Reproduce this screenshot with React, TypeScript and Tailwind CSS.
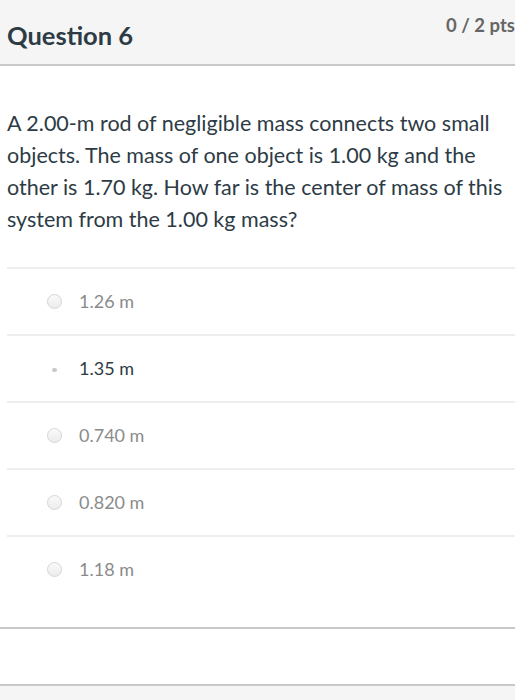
const answers = [
  { label: "1.26 m", selected: false },
  { label: "1.35 m", selected: true },
  { label: "0.740 m", selected: false },
  { label: "0.820 m", selected: false },
  { label: "1.18 m", selected: false },
]

export default function App() {
  return (
    <div className="min-h-[700px] w-[515px] overflow-hidden bg-white font-['Lato','Liberation_Sans',sans-serif]">
      {/* Header */}
      <div className="relative h-[66px] border-b-2 border-[#c9c9c9] bg-[#f5f5f5]">
        <h2 className="absolute left-[7px] top-[20px] text-[25.5px] font-bold leading-[30px] text-[#2d3b45]">
          Question 6
        </h2>
        <div className="absolute right-0 top-[14px] text-[18.5px] font-bold leading-[22px] text-[#666]">
          0 / 2 pts
        </div>
      </div>

      {/* Body */}
      <div className="pt-[41px]">
        <p className="pl-[7px] text-[21.5px] leading-[32px] text-[#2d3b45]">
          A 2.00-m rod of negligible mass connects two small objects. The mass of one object is 1.00 kg and the other is
          1.70 kg. How far is the center of mass of this system from the 1.00 kg mass?
        </p>

        <div className="ml-[7px] mt-[32px]">
          {answers.map((a) => (
            <div key={a.label} className="flex h-[67px] items-center border-t-2 border-[#eeeeee]">
              <div className="flex w-[72px] justify-center pl-[22px]">
                {a.selected ? (
                  <span className="mt-[2px] h-[4px] w-[5px] rounded-full bg-[#c8c8c8]" />
                ) : (
                  <span className="h-[15px] w-[15px] rounded-full border border-[#d5d5d5] bg-gradient-to-b from-[#fafafa] to-[#ececec]" />
                )}
              </div>
              <span className={`text-[18px] ${a.selected ? "text-[#2d3b45]" : "text-[#8b8b8b]"}`}>{a.label}</span>
            </div>
          ))}
        </div>
      </div>

      <div className="mt-[25px] h-[59px] border-y-2 border-[#c9c9c9]" />
      <div className="h-[20px] bg-[#f5f5f5]" />
    </div>
  )
}
